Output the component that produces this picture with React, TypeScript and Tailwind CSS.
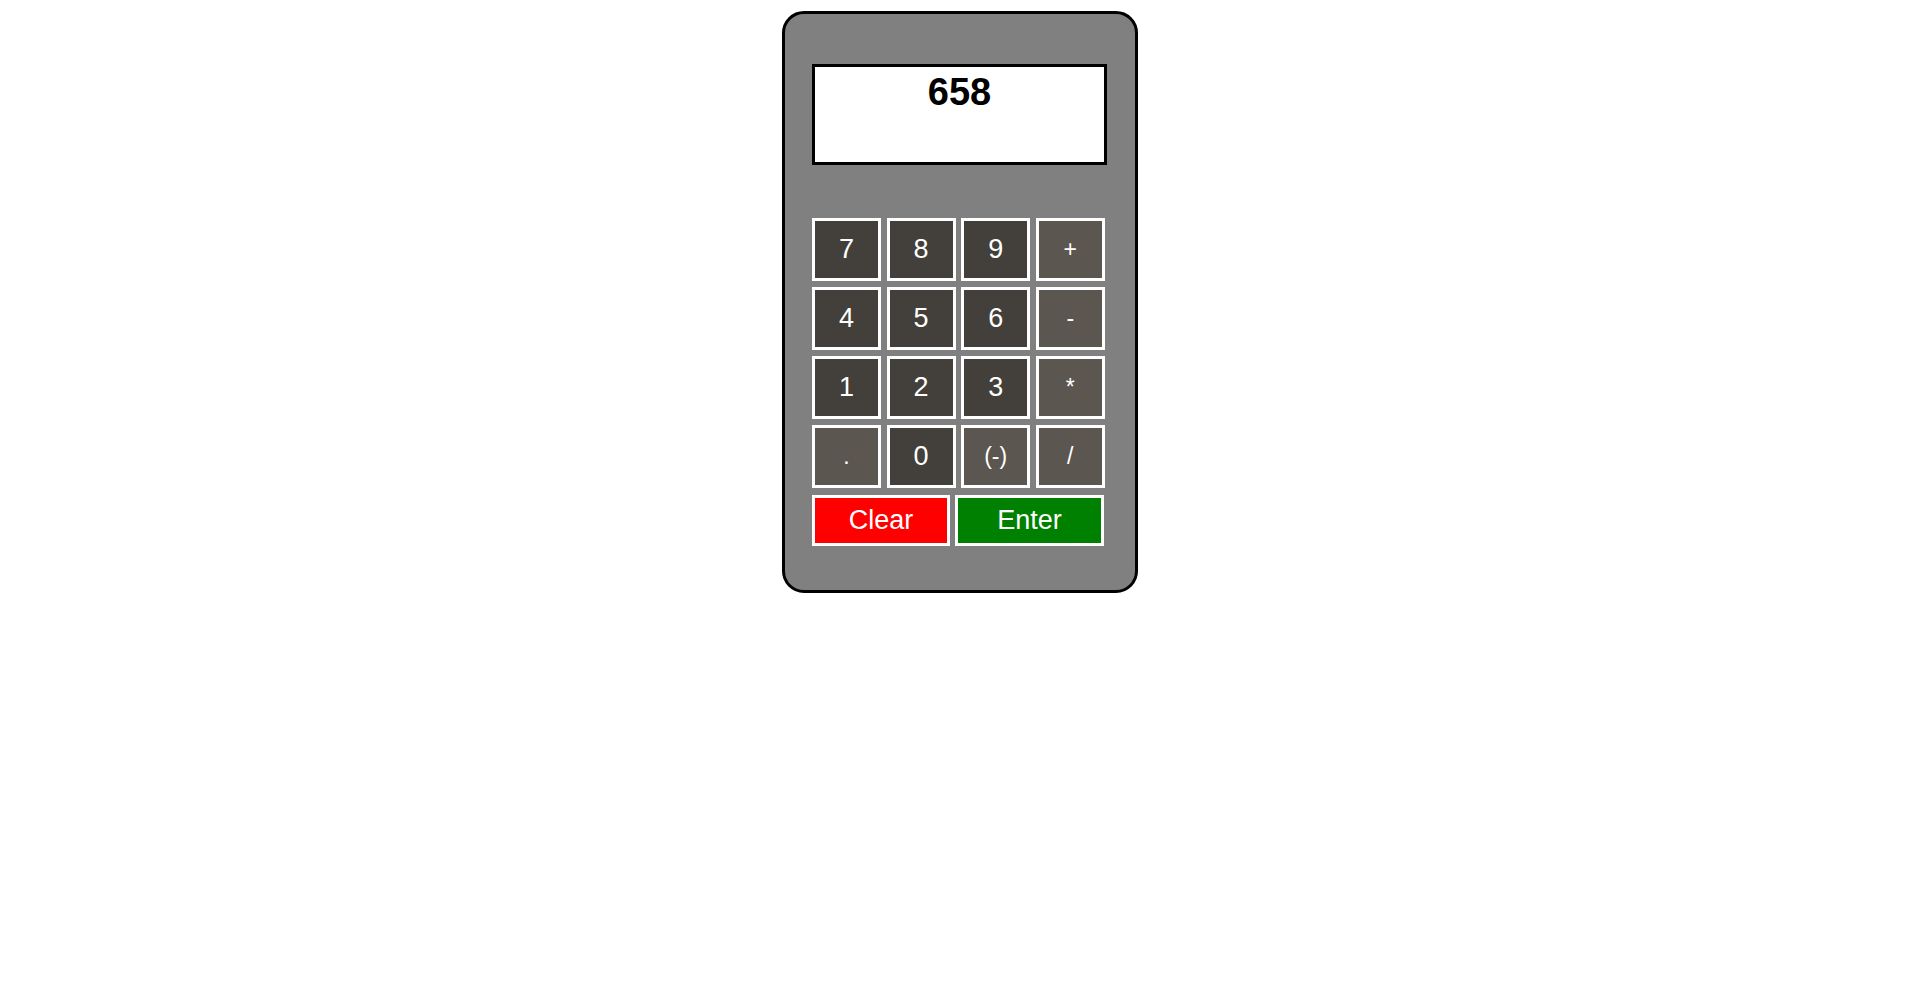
const digitBtn =
  "flex items-center justify-center h-[63px] border-[3px] border-white bg-[#433f3a] text-white text-[27px] font-['Liberation_Sans',Arial,sans-serif]";
const opBtn =
  "flex items-center justify-center h-[63px] border-[3px] border-white bg-[#5c5650] text-white text-[23px] font-['Liberation_Sans',Arial,sans-serif]";

const keys: { label: string; op?: boolean }[] = [
  { label: "7" },
  { label: "8" },
  { label: "9" },
  { label: "+", op: true },
  { label: "4" },
  { label: "5" },
  { label: "6" },
  { label: "-", op: true },
  { label: "1" },
  { label: "2" },
  { label: "3" },
  { label: "*", op: true },
  { label: ".", op: true },
  { label: "0" },
  { label: "(-)", op: true },
  { label: "/", op: true },
];

const App = () => {
  return (
    <div className="min-h-screen bg-white pt-[11px] pl-[2px] flex justify-center items-start">
      {/* calculator body */}
      <div className="w-[356px] h-[582px] border-[3px] border-black rounded-[22px] bg-[#808080] pl-[27px] pt-[50px]">
        {/* display */}
        <div className="w-[295px] h-[101px] border-[3px] border-black bg-white text-center">
          <span className="block pt-[3px] text-[38px] leading-[44px] font-bold text-black font-['Comic_Sans_MS','Liberation_Sans',sans-serif]">
            658
          </span>
        </div>

        {/* keypad */}
        <div className="mt-[53px] w-[292px] grid grid-cols-[69px_69px_69px_69px] gap-x-[5.6px] gap-y-[6px]">
          {keys.map((k) => (
            <button key={k.label} className={k.op ? opBtn : digitBtn}>
              {k.label}
            </button>
          ))}
        </div>

        {/* actions */}
        <div className="mt-[7px] flex gap-[5px]">
          <button className="w-[138px] h-[51px] border-[3px] border-white bg-[#ff0000] text-white text-[27px] font-['Liberation_Sans',Arial,sans-serif] flex items-center justify-center">
            Clear
          </button>
          <button className="w-[149px] h-[51px] border-[3px] border-white bg-[#008000] text-white text-[27px] font-['Liberation_Sans',Arial,sans-serif] flex items-center justify-center">
            Enter
          </button>
        </div>
      </div>
    </div>
  );
};

export default App;
